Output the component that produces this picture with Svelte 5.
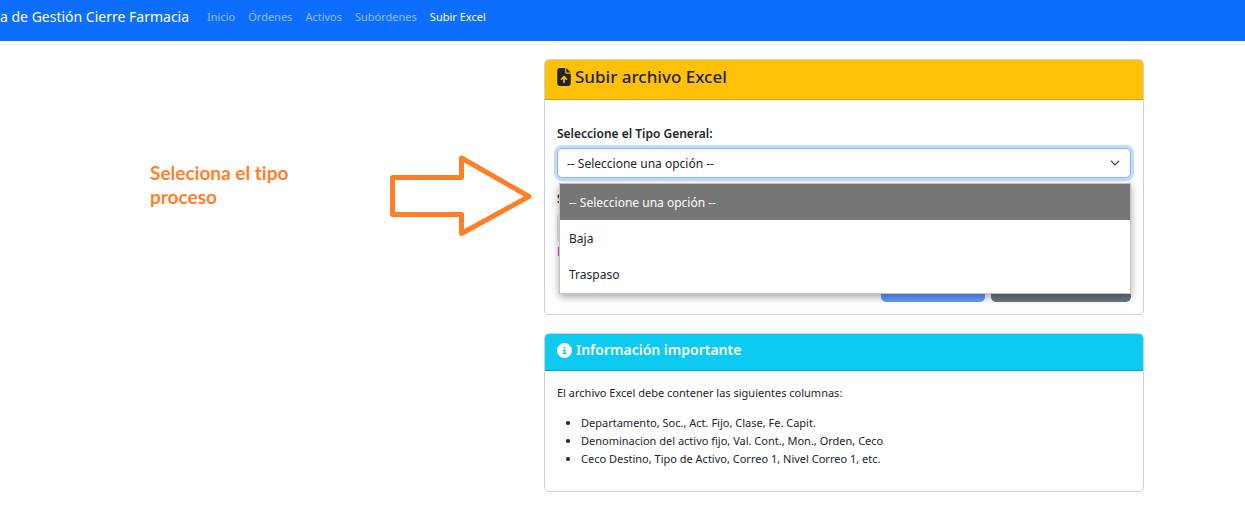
<script>
  const links = ['Inicio', 'Órdenes', 'Activos', 'Subórdenes', 'Subir Excel'];
  const active = 'Subir Excel';
  const options = ['-- Seleccione una opción --', 'Baja', 'Traspaso'];
  const columns = [
    'Departamento, Soc., Act. Fijo, Clase, Fe. Capit.',
    'Denominacion del activo fijo, Val. Cont., Mon., Orden, Ceco',
    'Ceco Destino, Tipo de Activo, Correo 1, Nivel Correo 1, etc.'
  ];
  let selected = $state(options[0]);
</script>

<header class="navbar">
  <a class="brand" href="#inicio">a de Gestión Cierre Farmacia</a>
  <nav>
    {#each links as link}
      <a href="#{link}" class:active={link === active}>{link}</a>
    {/each}
  </nav>
</header>

<main>
  <aside class="hint">
    <p>Seleciona el tipo proceso</p>
    <svg width="144" height="84" viewBox="0 0 144 84" aria-hidden="true">
      <path d="M4.500 24.500H73.500V5L141 43.500L73.500 80.500V61.500H4.500Z" fill="none" stroke="#ff7f27" stroke-width="5" stroke-linejoin="round" />
    </svg>
  </aside>

  <div class="stack">
    <section class="card">
      <h1 class="upload">
        <svg width="14" height="18" viewBox="0 0 384 512" aria-hidden="true">
          <path fill="currentColor" d="M64 0C28.700 0 0 28.700 0 64V448c0 35.300 28.700 64 64 64H320c35.300 0 64-28.700 64-64V160H256c-17.700 0-32-14.300-32-32V0H64zM256 0V128H384L256 0zM216 408c0 13.300-10.700 24-24 24s-24-10.700-24-24V305.900l-31 31c-9.400 9.400-24.600 9.400-33.900 0s-9.400-24.600 0-33.900l72-72c9.400-9.400 24.600-9.400 33.900 0l72 72c9.400 9.400 9.400 24.600 0 33.900s-24.600 9.400-33.900 0l-31-31V408z" />
        </svg>
        Subir archivo Excel
      </h1>
      <form class="form">
        <div class="field">
          <label for="tipo">Seleccione el Tipo General:</label>
          <select id="tipo" bind:value={selected}>
            {#each options as option}
              <option value={option}>{option}</option>
            {/each}
          </select>
          <ul class="menu" role="listbox" aria-label="Tipo General">
            {#each options as option}
              <li role="option" aria-selected={option === selected} class:selected={option === selected}>{option}</li>
            {/each}
          </ul>
        </div>
        <div class="field">
          <label for="archivo">Seleccione el archivo:</label>
          <input id="archivo" type="text" readonly />
          <a class="help" href="#formato">Formato</a>
        </div>
        <div class="actions">
          <button type="button" class="primary" disabled>Subir</button>
          <button type="button" class="secondary">Volver</button>
        </div>
      </form>
    </section>

    <section class="card">
      <h2 class="info">
        <svg width="15" height="15" viewBox="0 0 512 512" aria-hidden="true">
          <path fill="currentColor" d="M256 512A256 256 0 1 0 256 0a256 256 0 1 0 0 512zM216 336h24V272H216c-13.300 0-24-10.700-24-24s10.700-24 24-24h48c13.300 0 24 10.700 24 24v88h8c13.300 0 24 10.700 24 24s-10.700 24-24 24H216c-13.300 0-24-10.700-24-24s10.700-24 24-24zm40-208a32 32 0 1 1 0 64 32 32 0 1 1 0-64z" />
        </svg>
        Información importante
      </h2>
      <div class="notes">
        <p>El archivo Excel debe contener las siguientes columnas:</p>
        <ul>
          {#each columns as column}
            <li>{column}</li>
          {/each}
        </ul>
      </div>
    </section>
  </div>
</main>

<style>
  :global(body) {
    margin: 0;
    background: #fff;
    color: #212529;
    font: 12px/18px "Segoe UI", "Noto Sans", "Open Sans", sans-serif;
  }
  h1, h2, p, ul { margin: 0; padding: 0; }
  * { box-sizing: border-box; }

  .navbar {
    display: flex;
    align-items: center;
    gap: 18px;
    padding: 6px 0 13px;
    background: #0d6efd;
    white-space: nowrap;
  }
  .navbar a { text-decoration: none; color: rgba(255, 255, 255, 0.55); }
  .navbar .brand { color: #fff; font-size: 14px; line-height: 22px; }
  .navbar nav { display: flex; gap: 13px; font-size: 11px; }
  .navbar nav .active { color: #fff; }

  main {
    display: grid;
    grid-template-columns: 544fr 600fr 101fr;
    padding: 18px 0 24px;
  }
  .hint {
    display: flex;
    align-items: flex-start;
    justify-content: space-between;
    padding: 94px 12px 0 150px;
    color: #ff7f27;
    font: bold 19px/24px Lato, sans-serif;
    font-variant-ligatures: none;
  }
  .hint p { width: 150px; padding-top: 8px; }
  .hint svg { flex: none; }

  .stack { display: flex; flex-direction: column; gap: 18px; }
  .card { border: 1px solid #cfd0d1; border-radius: 5px; }
  h1, h2 {
    display: flex;
    gap: 4px;
    padding: 7px 12px 12px;
    border-bottom: 1px solid rgba(0, 0, 0, 0.18);
    border-radius: 4px 4px 0 0;
  }
  .upload { background: #ffc107; font-size: 17px; line-height: 20px; font-weight: 500; }
  .info { background: #0dcaf0; color: #fff; font-size: 14px; line-height: 18px; font-weight: 600; padding-bottom: 11px; }
  h1 svg, h2 svg { flex: none; align-self: center; }

  .form { padding: 25px 12px 12px; }
  .field { position: relative; margin-bottom: 12px; }
  label { display: block; margin-bottom: 5px; font-weight: 600; }
  select, input {
    display: block;
    width: 100%;
    height: 30px;
    padding: 2px 9px 0;
    border: 1px solid #dee2e6;
    border-radius: 5px;
    color: inherit;
    font: inherit;
  }
  select {
    appearance: none;
    border-color: #86b7fe;
    box-shadow: 0 0 0 3px #c2dbfe;
    background: #fff url("data:image/svg+xml,%3Csvg xmlns='http://www.w3.org/2000/svg' viewBox='0 0 16 16'%3E%3Cpath fill='none' stroke='%23343a40' stroke-linecap='round' stroke-linejoin='round' stroke-width='2' d='m2 5 6 6 6-6'/%3E%3C/svg%3E") no-repeat right 10px center / 10px 10px;
  }
  input { background: #e9ecef; }
  .help { display: block; color: #6f42c1; text-decoration: none; }
  .menu {
    position: absolute;
    z-index: 1;
    top: 58px;
    left: 2px;
    right: 0;
    padding-bottom: 1px;
    border: 1px solid #c4c4c4;
    background: #fff;
    box-shadow: 0 3px 8px rgba(0, 0, 0, 0.35);
    list-style: none;
  }
  .menu li { padding: 10px 9px 8px; }
  .menu .selected { background: #767676; color: #fff; }
  .actions { display: flex; justify-content: flex-end; gap: 6px; }
  button {
    width: 140px;
    height: 29px;
    border: 0;
    border-radius: 5px;
    color: #fff;
    font: inherit;
  }
  .primary { width: 104px; background: #0d6efd; opacity: 0.65; }
  .secondary { background: #6c757d; }

  .notes { padding: 13px 12px 23px; font-size: 11px; }
  .notes ul { margin-top: 12px; padding-left: 24px; }
</style>
